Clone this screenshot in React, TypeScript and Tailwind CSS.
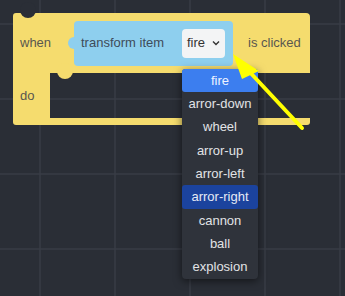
import React from "react";

const options = [
  "fire",
  "arror-down",
  "wheel",
  "arror-up",
  "arror-left",
  "arror-right",
  "cannon",
  "ball",
  "explosion",
];

function Grid() {
  const xs = [40, 115, 190, 265, 340];
  const ys = [24, 99, 174, 249];
  return (
    <svg className="absolute inset-0" width="345" height="296">
      {xs.map((x) => (
        <line key={`x${x}`} x1={x} y1={0} x2={x} y2={296} stroke="#383c46" strokeWidth="1.5" />
      ))}
      {ys.map((y) => (
        <line key={`y${y}`} x1={0} y1={y} x2={345} y2={y} stroke="#383c46" strokeWidth="1.5" />
      ))}
    </svg>
  );
}

export default function App() {
  return (
    <div className="relative w-[345px] h-[296px] overflow-hidden bg-[#2a2e36] font-['Liberation_Sans',Arial,sans-serif] text-[13px]">
      <Grid />

      {/* Event block */}
      <div className="absolute left-[13px] top-[13px] w-[297px]">
        <div className="relative flex h-[60px] items-center rounded-tl-[3px] rounded-tr-[4px] bg-[#f5dc6e]">
          {/* top notch */}
          <div className="absolute left-[6.5px] -top-[11px] h-4 w-4 rounded-full bg-[#2a2e36]" />
          {/* bottom bump */}
          <div className="absolute left-[44px] top-[50px] z-10 h-4 w-4 rounded-full bg-[#f5dc6e]" />

          <span className="w-[61px] pl-[7px] text-[#59574f]">when</span>

          <div className="relative flex h-[45px] w-[159px] items-center rounded-[4px] bg-[#8ecfee] pl-[7px]">
            <div className="absolute -left-[6px] top-[16.5px] h-3 w-3 rounded-full bg-[#8ecfee]" />
            <span className="text-[#3e4c5a]">transform item</span>
            <div className="ml-auto mr-[8px] flex h-[29px] w-[43px] items-center rounded-[4px] bg-[#f3f4f5] pl-[5px] text-[#333]">
              <span>fire</span>
              <svg className="ml-[7px]" width="8" height="6" viewBox="0 0 8 6">
                <path d="M1 1.5 L4 4.5 L7 1.5" fill="none" stroke="#333" strokeWidth="1.4" />
              </svg>
            </div>
          </div>

          <span className="ml-[15px] text-[#59574f]">is clicked</span>
        </div>

        <div className="flex h-[45px]">
          <div className="flex w-[37px] items-center bg-[#f5dc6e] pl-[7px] text-[#59574f]">do</div>
        </div>

        <div className="h-[7px] rounded-bl-[3px] rounded-br-[3px] bg-[#f5dc6e]" />
      </div>

      {/* Dropdown menu */}
      <div className="absolute left-[182px] top-[69px] w-[76px] rounded-[4px] bg-[#2f333b] shadow-[0_2px_8px_rgba(0,0,0,0.55)]">
        {options.map((o, i) => (
          <div
            key={o}
            className={`flex h-[23.3px] items-center justify-center rounded-[3px] ${
              i === 0
                ? "bg-[#3c7eef] text-[#eef3ff]"
                : i === 5
                ? "bg-[#1b439e] text-[#e6eaf5]"
                : "text-[#e2e3e6]"
            }`}
          >
            {o}
          </div>
        ))}
      </div>

      {/* Pointer arrow */}
      <svg className="pointer-events-none absolute inset-0" width="345" height="296">
        <line x1="302" y1="128" x2="245" y2="67" stroke="#ffff00" strokeWidth="4" strokeLinecap="round" />
        <polygon points="233,54 259,71 242,79" fill="#ffff00" />
      </svg>
    </div>
  );
}
